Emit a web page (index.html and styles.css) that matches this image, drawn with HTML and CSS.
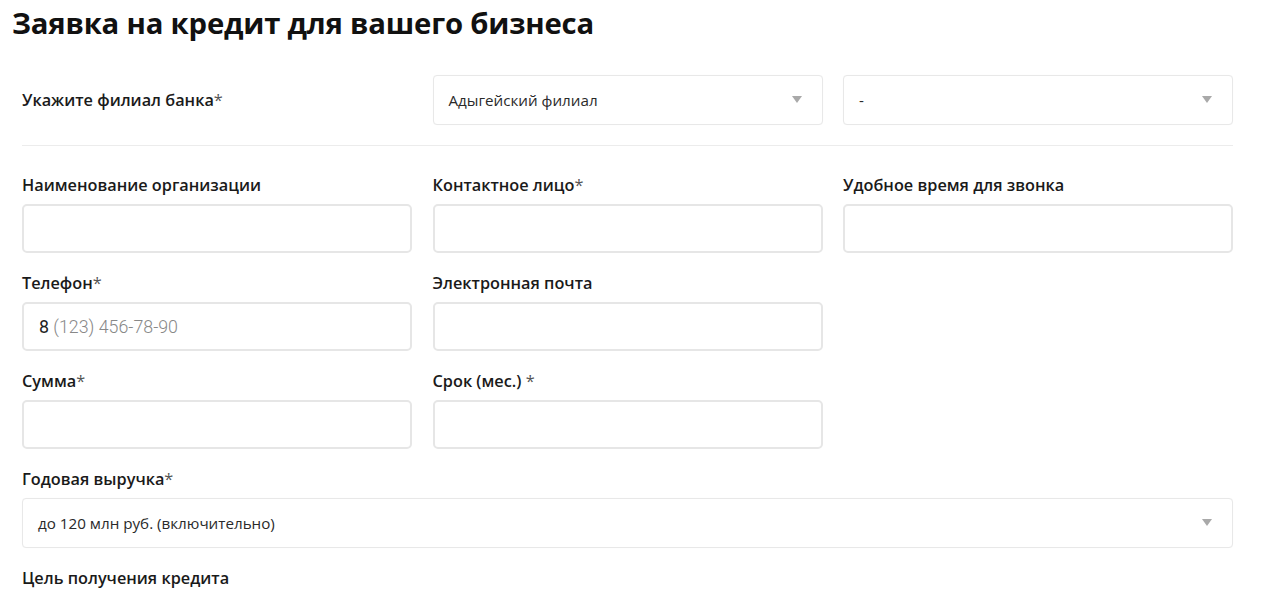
FILE: index.html
```html
<!DOCTYPE html>
<html lang="ru">
<head>
<meta charset="utf-8">
<link rel="stylesheet" href="styles.css">
</head>
<body>
<h1 class="title">Заявка на кредит для вашего бизнеса</h1>
<form class="form">
  <div class="branch-row">
    <div class="branch-label">Укажите филиал банка<span class="req">*</span></div>
    <div class="select"><span>Адыгейский филиал</span><i class="arrow"></i></div>
    <div class="select"><span>-</span><i class="arrow"></i></div>
  </div>
  <hr class="divider">
  <div class="grid">
    <div class="field">
      <div class="label">Наименование организации</div>
      <div class="input"></div>
    </div>
    <div class="field">
      <div class="label">Контактное лицо<span class="req">*</span></div>
      <div class="input"></div>
    </div>
    <div class="field">
      <div class="label">Удобное время для звонка</div>
      <div class="input"></div>
    </div>
    <div class="field">
      <div class="label">Телефон<span class="req">*</span></div>
      <div class="input"><span class="ph-first">8</span><span class="ph"> (123) 456-78-90</span></div>
    </div>
    <div class="field">
      <div class="label">Электронная почта</div>
      <div class="input"></div>
    </div>
    <div class="field empty"></div>
    <div class="field">
      <div class="label">Сумма<span class="req">*</span></div>
      <div class="input"></div>
    </div>
    <div class="field">
      <div class="label">Срок (мес.) <span class="req">*</span></div>
      <div class="input"></div>
    </div>
    <div class="field empty"></div>
    <div class="field wide">
      <div class="label">Годовая выручка<span class="req">*</span></div>
      <div class="select"><span>до 120 млн руб. (включительно)</span><i class="arrow"></i></div>
    </div>
    <div class="field wide">
      <div class="label">Цель получения кредита</div>
    </div>
  </div>
</form>
</body>
</html>
```
FILE: styles.css
```css
html, body {
  margin: 0;
  padding: 0;
  background: #ffffff;
  color: #1a1a1a;
  font-family: "Open Sans", "Noto Sans", sans-serif;
}
.title {
  margin: 0;
  padding: 4px 0 0 12px;
  font-size: 29.3px;
  line-height: 38px;
  font-weight: 700;
  color: #111;
  letter-spacing: -0.2px;
}
.form {
  width: 1211px;
  margin: 33px 0 0 22px;
}
.branch-row {
  display: grid;
  grid-template-columns: 390px 390px 390px;
  column-gap: 20.5px;
  align-items: center;
}
.branch-label, .label {
  font-size: 16.3px;
  font-weight: 600;
  line-height: 20px;
  color: #1a1a1a;
}
.req {
  font-weight: 400;
  color: #555;
}
.select {
  height: 50px;
  box-sizing: border-box;
  border: 1px solid #e8e8e8;
  border-radius: 4px;
  box-shadow: 0 0 1px rgba(0,0,0,0.04);
  display: flex;
  align-items: center;
  justify-content: space-between;
  padding: 0 20px 0 15px;
  font-size: 15.2px;
  color: #2a2a2a;
  background: #fff;
}
.arrow {
  width: 0;
  height: 0;
  border-left: 5px solid transparent;
  border-right: 5px solid transparent;
  border-top: 7px solid #a9a9a9;
  margin-top: -2px;
}
.divider {
  border: 0;
  border-top: 1px solid #ececec;
  margin: 20px 0 29px;
  height: 0;
}
.grid {
  display: grid;
  grid-template-columns: 390px 390px 390px;
  column-gap: 20.5px;
  row-gap: 20px;
}
.wide {
  grid-column: 1 / 4;
}
.label {
  margin-bottom: 9px;
}
.input {
  height: 49px;
  box-sizing: border-box;
  border: 2px solid #e6e6e6;
  border-radius: 5px;
  display: flex;
  align-items: center;
  padding: 0 15px;
  font-size: 17.8px;
  font-family: "Roboto", "Noto Sans", sans-serif;
  font-weight: 300;
}
.ph-first {
  color: #222;
  font-weight: 400;
}
.ph {
  color: #888;
  white-space: pre;
}
```
